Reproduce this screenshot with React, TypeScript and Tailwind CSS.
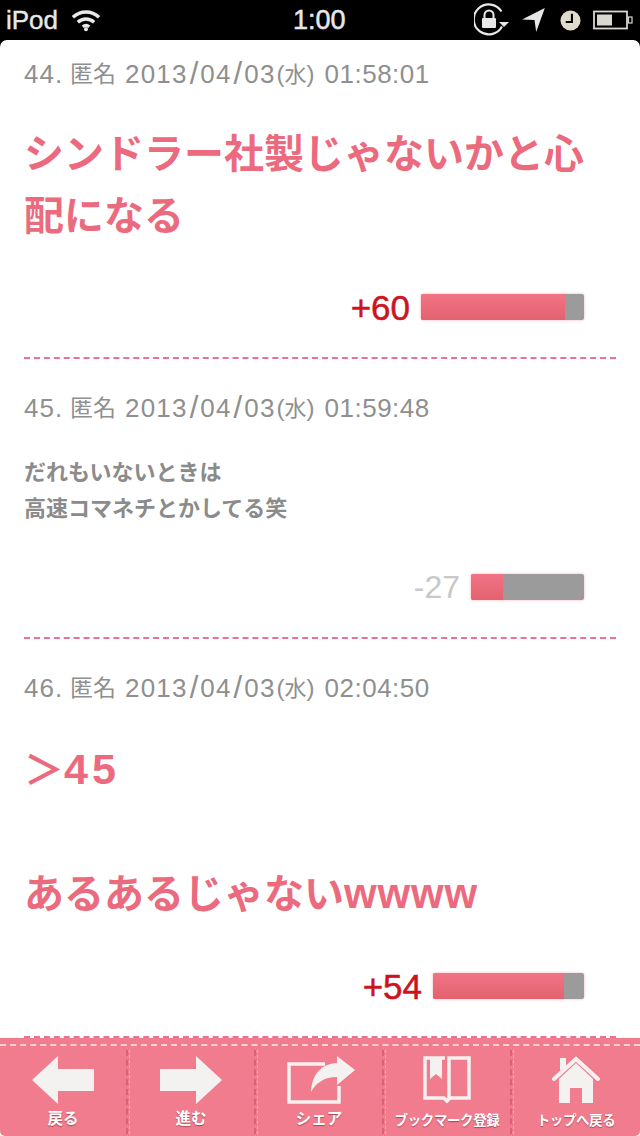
const jp = "font-['Liberation_Sans','Noto_Sans_CJK_JP',sans-serif]";

function Rating({ label, positive, barW, fillW }: { label: string; positive: boolean; barW: string; fillW: number }) {
  return (
    <div className="flex items-center justify-end h-[26px] pr-[56px] gap-[11px]">
      <span className={positive ? "text-[35px] leading-none text-[#cc1420] [-webkit-text-stroke:0.5px_#cc1420]" : "text-[32px] leading-none text-[#c8c8c8]"}>{label}</span>
      <div className={`${barW} h-[26px] flex bg-[#9b9b9b] rounded-[2px] overflow-hidden shadow-[0_0_3px_#f7b0b8]`}>
        <div className="h-full bg-gradient-to-b from-[#f27386] to-[#e2626f]" style={{ width: fillW }} />
      </div>
    </div>
  );
}

function Divider() {
  return <div className="mx-[24px] border-t-2 border-dashed border-[#e8709a]" />;
}

function Header({ n, date, day, time }: { n: string; date: string[]; day: string; time: string }) {
  return (
    <div className="flex items-center h-[34px] text-[26px] leading-[34px] text-[#8f8f8f] whitespace-nowrap">
      <span className="w-[46px] tracking-[1px]">{n}</span>
      <span className="text-[23px] w-[55px]">匿名</span>
      <span className="tracking-[1.2px]">{date[0]}</span>
      <span className="text-[31px] mx-[2px]">/</span>
      <span className="tracking-[1.2px]">{date[1]}</span>
      <span className="text-[31px] mx-[2px]">/</span>
      <span className="tracking-[1.2px]">{date[2]}</span>
      <span className="text-[24px] w-[48px] ml-[1px]">(<span className="text-[22px]">{day}</span>)</span>
      <span className="tracking-[0.5px]">{time}</span>
    </div>
  );
}

function Nav({ label, small, last, children }: { label: string; small?: boolean; last?: boolean; children: React.ReactNode }) {
  return (
    <div className={`w-[128px] h-[84px] relative flex flex-col items-center ${last ? "" : "border-r-2 border-dashed border-[#dc6075]"}`}>
      {!last && <div className="absolute right-[-4px] top-0 bottom-0 border-r border-dashed border-[#f9a6b2]" />}
      <div className="h-[60px] flex items-center justify-center">{children}</div>
      <div className={`font-bold text-white leading-none whitespace-nowrap [text-shadow:0_1px_1px_#a84a58] ${small ? "text-[13.5px] tracking-[-0.4px] mt-[4px]" : "text-[15.5px] mt-[1px]"}`}>{label}</div>
    </div>
  );
}

export default function App() {
  return (
    <div className={`w-[640px] h-[1136px] flex flex-col overflow-hidden bg-black ${jp}`}>
      {/* Status bar */}
      <div className="h-[40px] shrink-0 flex items-center text-[#e8e8e8] relative">
        <span className="ml-[6px] text-[26px] leading-none [-webkit-text-stroke:0.4px_#e8e8e8]">iPod</span>
        <svg width="32" height="24" viewBox="0 0 28 22" className="ml-[12px]" fill="none" stroke="#e8e8e8" strokeWidth="3.2">
          <path d="M2 8.5C9 2 19 2 26 8.5" />
          <path d="M6.5 13C11 9 17 9 21.5 13" />
          <path d="M11 17.2c2-1.6 4-1.6 6 0" strokeWidth="3" />
          <circle cx="14" cy="19.5" r="1.8" fill="#e8e8e8" stroke="none" />
        </svg>
        <span className="absolute left-[293px] top-[6px] text-[27px] leading-[28px] [-webkit-text-stroke:0.5px_#e8e8e8]">1:00</span>
        <div className="ml-auto mr-[7px] flex items-center">
          <svg width="36" height="36" viewBox="0 0 36 36" fill="none">
            <path d="M28 24.5A15 15 0 1 1 27.5 9.5" stroke="#e8e8e8" strokeWidth="2.2" />
            <path d="M25 20h10l-5 5z" fill="#e8e8e8" />
            <rect x="8" y="16" width="14" height="10" rx="1" fill="#e8e8e8" />
            <path d="M10.5 16v-3a4.5 4.5 0 0 1 9 0v3" stroke="#e8e8e8" strokeWidth="2" />
          </svg>
          <svg width="24" height="26" viewBox="0 0 22 24" className="ml-[12px]"><path d="M0 11.5L21 1 13 23l-1.5-11z" fill="#e8e8e8" /></svg>
          <svg width="21" height="21" viewBox="0 0 22 22" className="ml-[14px]"><circle cx="11" cy="11" r="10.5" fill="#e0dccc" /><path d="M12.5 4v8.5H6" fill="none" stroke="#000" strokeWidth="2.2" /></svg>
          <svg width="40" height="20" viewBox="0 0 40 20" className="ml-[12px]" fill="none">
            <rect x="1" y="1.5" width="33" height="17" stroke="#d8d8d0" strokeWidth="1.8" />
            <rect x="4" y="4.5" width="15" height="11" fill="#d8d8d0" />
            <rect x="35.5" y="7" width="3.5" height="6" stroke="#d8d8d0" strokeWidth="1.2" />
          </svg>
        </div>
      </div>

      {/* Content */}
      <div className="flex-1 min-h-0 bg-white rounded-t-[7px] overflow-hidden">
        <div className="px-[24px] pt-[17px]">
          <Header n="44." date={["2013", "04", "03"]} day="水" time="01:58:01" />
          <div className="mt-[32px] text-[40px] leading-[62px] font-bold text-[#ec6a7e]">シンドラー社製じゃないかと心配になる</div>
        </div>
        <div className="mt-[47px]"><Rating label="+60" positive barW="w-[163px]" fillW={144} /></div>
        <div className="mt-[37px]"><Divider /></div>

        <div className="px-[24px] pt-[32px]">
          <Header n="45." date={["2013", "04", "03"]} day="水" time="01:59:48" />
          <div className="mt-[30px] text-[22px] leading-[36px] font-bold text-[#8b8b8b]">だれもいないときは<br />高速コマネチとかしてる笑</div>
        </div>
        <div className="mt-[47px]"><Rating label="-27" positive={false} barW="w-[113px]" fillW={32} /></div>
        <div className="mt-[37px]"><Divider /></div>

        <div className="px-[24px] pt-[32px]">
          <Header n="46." date={["2013", "04", "03"]} day="水" time="02:04:50" />
          <div className="mt-[33px] text-[40px] leading-[62px] font-bold text-[#ec6a7e]">
            ＞<span className="text-[43px] tracking-[4px]">45</span>
            <br /><br />
            あるあるじゃない<span className="text-[42px] tracking-[0.8px]">wwww</span>
          </div>
        </div>
        <div className="mt-[48px]"><Rating label="+54" positive barW="w-[151px]" fillW={131} /></div>
        <div className="mt-[37px]"><Divider /></div>
      </div>

      {/* Footer */}
      <div className="h-[98px] shrink-0 bg-white">
        <div className="h-full rounded-b-[5px] overflow-hidden bg-[#f07c8d]">
          <div className="mt-[6px] h-0 border-t-2 border-dashed border-[#fbd2d8]" />
          <div className="flex mt-[4px]">
            <Nav label="戻る">
              <svg width="62" height="48" viewBox="0 0 62 48"><path d="M0 24L26 0v13h36v22H26v13z" fill="#f4f2f1" /></svg>
            </Nav>
            <Nav label="進む">
              <svg width="62" height="48" viewBox="0 0 62 48"><path d="M62 24L36 0v13H0v22h36v13z" fill="#f4f2f1" /></svg>
            </Nav>
            <Nav label="シェア">
              <svg width="68" height="48" viewBox="0 0 68 48" fill="none" className="ml-[3px]">
                <path d="M38 8H2v38h50V30" stroke="#f4f2f1" strokeWidth="3.5" />
                <path d="M68 14L50 0v7C34 8 25 18 24 36c5-9 13-15 26-15v8z" fill="#f4f2f1" />
              </svg>
            </Nav>
            <Nav label="ブックマーク登録" small>
              <svg width="52" height="50" viewBox="0 0 50 50" fill="none">
                <path d="M23 3H3v40h19l3 3 3-3h19V3H27v40" stroke="#f4f2f1" strokeWidth="3.5" />
                <path d="M8 2h12v22l-6-5-6 5z" fill="#f4f2f1" />
              </svg>
            </Nav>
            <Nav label="トップへ戻る" small last>
              <svg width="48" height="50" viewBox="0 0 48 50">
                <path d="M7 24L24 8l17 16v24H30V33H18v15H7z" fill="#f4f2f1" />
                <path d="M2 24L24 4l22 20" fill="none" stroke="#f4f2f1" strokeWidth="4" strokeLinecap="round" />
                <rect x="8" y="3" width="6" height="12" fill="#f4f2f1" />
              </svg>
            </Nav>
          </div>
        </div>
      </div>
    </div>
  );
}
